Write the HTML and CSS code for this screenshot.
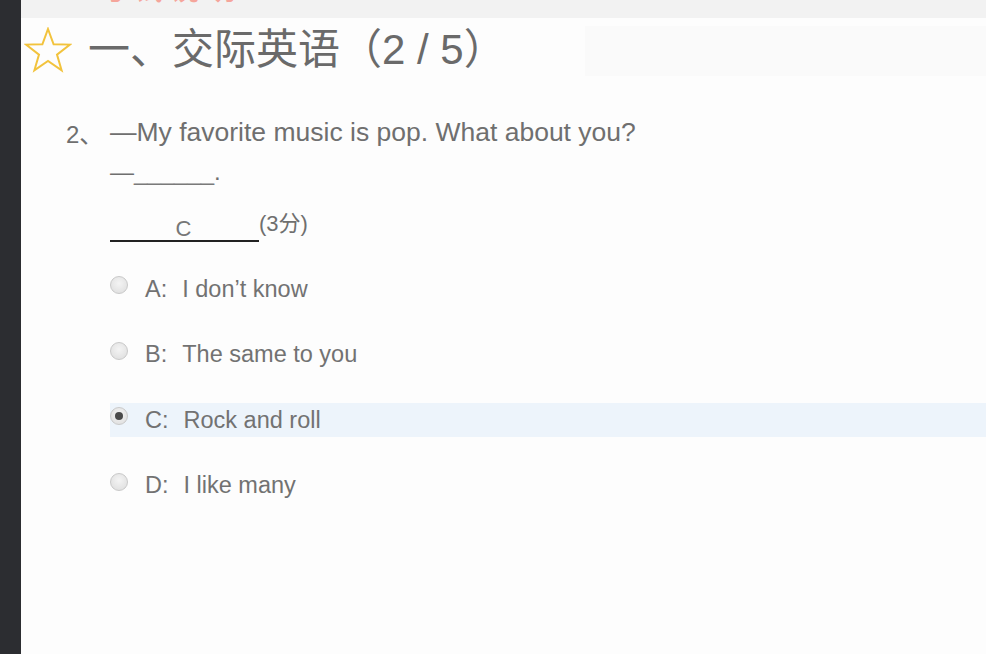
FILE: index.html
```html
<!DOCTYPE html>
<html lang="zh">
<head>
<meta charset="utf-8">
<link rel="stylesheet" href="styles.css">
</head>
<body>
<div class="page">
  <aside class="sidebar"></aside>
  <main class="main">
    <div class="topbar"><span class="topbar-text">考试说明</span></div>
    <div class="title-row">
      <svg class="star" viewBox="0 0 48 46" width="48" height="46" aria-hidden="true">
        <polygon points="24,2 29.6,17.3 46,17.6 33,27.6 37.6,43.3 24,34 10.4,43.3 15,27.6 2,17.6 18.4,17.3" fill="none" stroke="#f2c33d" stroke-width="2" stroke-linejoin="miter"/>
      </svg>
      <h1 class="title">一、交际英语（2 / 5）</h1>
      <div class="title-shade"></div>
    </div>
    <section class="question">
      <div class="q-line">
        <span class="q-num">2、</span>
        <span class="q-text">—My favorite music is pop. What about you?</span>
      </div>
      <div class="q-line q-indent">
        <span class="q-text">—<span class="blank">______</span>.</span>
      </div>
      <div class="answer-row">
        <span class="answer">C</span><span class="score">(3分)</span>
      </div>
      <ul class="options">
        <li class="option"><span class="radio"></span><span class="opt-label">A:</span><span class="opt-text">I don’t know</span></li>
        <li class="option"><span class="radio"></span><span class="opt-label">B:</span><span class="opt-text">The same to you</span></li>
        <li class="option selected"><span class="radio checked"></span><span class="opt-label">C:</span><span class="opt-text">Rock and roll</span></li>
        <li class="option"><span class="radio"></span><span class="opt-label">D:</span><span class="opt-text">I like many</span></li>
      </ul>
    </section>
  </main>
</div>
</body>
</html>
```

FILE: styles.css
```css
* { box-sizing: border-box; }
html, body { margin: 0; padding: 0; }
body {
  width: 986px;
  height: 654px;
  overflow: hidden;
  font-family: "Liberation Sans", Arial, "Noto Sans CJK SC", sans-serif;
  background: #fdfdfd;
}
.page {
  display: flex;
  height: 654px;
}
.sidebar {
  width: 21px;
  flex: none;
  background: #2c2d31;
}
.main {
  flex: 1;
  background: #fdfdfd;
  position: relative;
}
.topbar {
  height: 18px;
  background: #f2f2f2;
  overflow: hidden;
  position: relative;
}
.topbar-text {
  display: block;
  margin-left: 78px;
  margin-top: -26px;
  font-family: "Noto Sans CJK SC", sans-serif;
  font-size: 28px;
  line-height: 28px;
  color: #f5a59b;
  letter-spacing: 8px;
  font-weight: bold;
}
.title-row {
  display: flex;
  align-items: center;
  height: 64px;
  padding-left: 3px;
  position: relative;
}
.star {
  flex: none;
  display: block;
}
.title {
  margin: 0 0 0 16px;
  font-family: "Liberation Sans", Arial, "Noto Sans CJK SC", sans-serif;
  font-weight: normal;
  font-size: 42px;
  line-height: 64px;
  color: #6a6a6a;
  white-space: nowrap;
  position: relative;
  z-index: 1;
}
.title-shade {
  position: absolute;
  left: 564px;
  right: 0;
  top: 8px;
  height: 50px;
  background: #fafafa;
}
.question {
  padding-left: 45px;
  padding-top: 30px;
  color: #6f6f6f;
}
.q-line {
  display: flex;
  height: 40px;
  align-items: center;
  font-size: 26.5px;
  color: #6f6f6f;
}
.q-num {
  width: 44px;
  font-size: 24px;
  font-family: "Liberation Sans", Arial, "Noto Sans CJK SC", sans-serif;
}
.q-indent { padding-left: 44px; font-size: 24px; }
.blank { color: #7a7a7a; }
.answer-row {
  display: flex;
  align-items: flex-end;
  height: 44px;
  margin-top: 6px;
  padding-left: 44px;
}
.answer {
  display: inline-block;
  width: 149px;
  border-bottom: 2px solid #222;
  text-align: center;
  font-size: 22px;
  line-height: 22px;
  color: #777;
  padding-right: 2px;
}
.score {
  font-family: "Liberation Sans", Arial, "Noto Sans CJK SC", sans-serif;
  font-size: 22px;
  line-height: 24px;
  color: #6f6f6f;
  margin-bottom: 6px;
}
.options {
  list-style: none;
  margin: 30px 0 0 44px;
  padding: 0;
  display: flex;
  flex-direction: column;
  gap: 31.5px;
}
.option {
  display: flex;
  align-items: center;
  height: 34px;
  font-size: 23.5px;
  color: #727272;
}
.option.selected {
  background: #edf4fb;
}
.radio {
  width: 18px;
  height: 18px;
  border-radius: 50%;
  border: 1px solid #c9c9c9;
  background: radial-gradient(circle at 50% 40%, #f4f4f4 0%, #dcdcdc 100%);
  margin-right: 17px;
  margin-top: -8px;
  position: relative;
  flex: none;
}
.radio.checked::after {
  content: "";
  position: absolute;
  left: 4px;
  top: 4px;
  width: 8px;
  height: 8px;
  border-radius: 50%;
  background: #4a4a4a;
}
.opt-label { margin-right: 15px; }
```
